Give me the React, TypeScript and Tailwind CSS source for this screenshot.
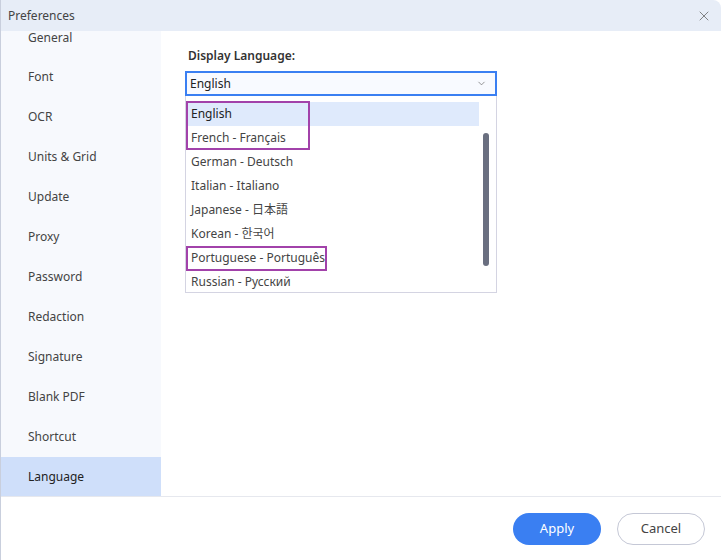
import { X, ChevronDown } from "lucide-react";

const navItems = [
  "General",
  "Font",
  "OCR",
  "Units & Grid",
  "Update",
  "Proxy",
  "Password",
  "Redaction",
  "Signature",
  "Blank PDF",
  "Shortcut",
  "Language",
];

const languages = [
  "English",
  "French - Français",
  "German - Deutsch",
  "Italian - Italiano",
  "Japanese - 日本語",
  "Korean - 한국어",
  "Portuguese - Português",
  "Russian - Русский",
];

const App = () => {
  return (
    <div
      className="w-[721px] h-[560px] bg-white flex flex-col overflow-hidden border-l border-[#c9cfdd] rounded-tr-lg text-[#333]"
      style={{ fontFamily: '"Segoe UI", "Noto Sans", "Noto Sans CJK JP", "Noto Sans CJK KR", sans-serif' }}
    >
      {/* Title bar */}
      <div className="h-[31px] shrink-0 bg-[#e7edf7] flex items-center justify-between pl-[7px] pr-[9px]">
        <span className="text-[12px] text-[#444]">Preferences</span>
        <X size={16} strokeWidth={1.2} className="text-[#666]" />
      </div>

      <div className="flex flex-1 min-h-0">
        {/* Sidebar, scrolled a little so the first row is partly hidden */}
        <div className="w-[160px] shrink-0 bg-[#f7f9fd] overflow-hidden">
          <div className="h-[26px] flex items-start pl-[27px] text-[12px] leading-[12px] text-[#444] pt-[1px]">
            General
          </div>
          {navItems.slice(1).map((item) => (
            <div
              key={item}
              className={
                "h-[40px] flex items-center pl-[27px] text-[12px] " +
                (item === "Language" ? "bg-[#cfdffa] text-[#222]" : "text-[#444]")
              }
            >
              {item}
            </div>
          ))}
        </div>

        {/* Content */}
        <div className="flex-1 pl-[24px] pt-[16px]">
          <div className="pl-[3px] text-[12px] font-semibold text-[#333]">Display Language:</div>
          <div className="mt-[6px] w-[312px]">
            <div className="h-[25px] border-2 border-[#3a7ff2] bg-[#f8faff] flex items-center justify-between pl-[3px] pr-[8px] text-[12px] text-[#222]">
              <span>English</span>
              <ChevronDown size={11} strokeWidth={1.5} className="text-[#666]" />
            </div>
            <div className="relative h-[197px] border border-t-0 border-[#d4d4e2] bg-white overflow-hidden">
              <div className="pt-[6px]">
                {languages.map((lang, i) => (
                  <div
                    key={lang}
                    className={
                      "h-[24px] flex items-center pl-[5px] text-[12px] mr-[17px] " +
                      (i === 0 ? "bg-[#dfeafc] text-[#222]" : "text-[#444]")
                    }
                  >
                    {lang}
                  </div>
                ))}
              </div>
              {/* scrollbar */}
              <div className="absolute right-[7px] top-[37px] w-[6px] h-[133px] rounded-full bg-[#6a6f80]" />
              {/* highlight boxes */}
              <div className="absolute left-0 top-[5px] w-[124px] h-[49px] border-2 border-[#a242aa]" />
              <div className="absolute left-0 top-[150px] w-[141px] h-[25px] border-2 border-[#a242aa]" />
            </div>
          </div>
        </div>
      </div>

      {/* Footer */}
      <div className="h-[64px] shrink-0 border-t border-[#e6e8ee] flex items-center justify-end gap-[16px] pr-[16px]">
        <button className="w-[88px] h-[32px] rounded-full bg-[#3a7ff2] text-white text-[13px]">Apply</button>
        <button className="w-[88px] h-[32px] rounded-full border border-[#c5c8d6] bg-white text-[#444] text-[13px]">
          Cancel
        </button>
      </div>
    </div>
  );
};

export default App;
